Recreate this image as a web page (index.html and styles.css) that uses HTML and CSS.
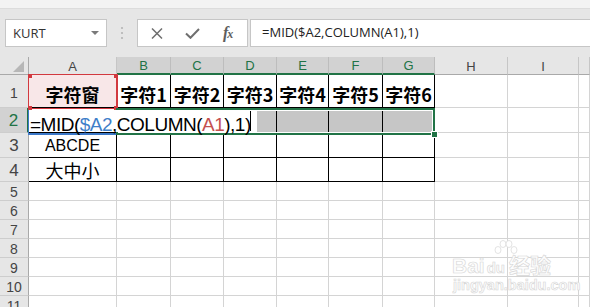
FILE: index.html
```html
<!DOCTYPE html>
<html lang="zh">
<head>
<meta charset="utf-8">
<title>Excel</title>
<link rel="stylesheet" href="styles.css">
</head>
<body>
<div class="topstrip"></div>
<div class="fbar">
  <div class="namebox"><span>KURT</span><span class="caret"></span></div>
  <div class="grip"><svg width="4" height="14" viewBox="0 0 4 14"><circle cx="2" cy="2" r="1.1" fill="#b5b5b5"/><circle cx="2" cy="7" r="1.1" fill="#b5b5b5"/><circle cx="2" cy="12" r="1.1" fill="#b5b5b5"/></svg></div>
  <div class="btns">
    <svg class="ic-x" width="12" height="11" viewBox="0 0 12 11"><path d="M1 0.5 L11 10.5 M11 0.5 L1 10.5" stroke="#6f6f6f" stroke-width="1.5" fill="none"/></svg>
    <svg class="ic-ok" width="15" height="11" viewBox="0 0 15 11"><path d="M1 5.5 L5.5 9.8 L14 1" stroke="#6f6f6f" stroke-width="2" fill="none"/></svg>
    <span class="fx">f<span class="fxx">x</span></span>
  </div>
  <div class="finput">=MID($A2,COLUMN(A1),1)</div>
</div>

<div class="sheet">
  <div class="corner"><span class="tri"></span></div>
  <div class="ch">A</div>
  <div class="ch sel">B</div>
  <div class="ch sel">C</div>
  <div class="ch sel">D</div>
  <div class="ch sel">E</div>
  <div class="ch sel">F</div>
  <div class="ch sel">G</div>
  <div class="ch">H</div>
  <div class="ch">I</div>
  <div class="ch"></div>

  <div class="rh r1">1</div>
  <div class="t h1 pink">字符窗</div>
  <div class="t h1">字符1</div>
  <div class="t h1">字符2</div>
  <div class="t h1">字符3</div>
  <div class="t h1">字符4</div>
  <div class="t h1">字符5</div>
  <div class="t h1">字符6</div>
  <div class="c"></div><div class="c"></div><div class="c"></div>

  <div class="rh big sel">2</div>
  <div class="t"></div>
  <div class="t gray"></div>
  <div class="t gray"></div>
  <div class="t gray"></div>
  <div class="t gray"></div>
  <div class="t gray"></div>
  <div class="t gray"></div>
  <div class="c"></div><div class="c"></div><div class="c"></div>

  <div class="rh big">3</div>
  <div class="t lat">ABCDE</div>
  <div class="t"></div><div class="t"></div><div class="t"></div><div class="t"></div><div class="t"></div><div class="t"></div>
  <div class="c"></div><div class="c"></div><div class="c"></div>

  <div class="rh big">4</div>
  <div class="t cjk">大中小</div>
  <div class="t"></div><div class="t"></div><div class="t"></div><div class="t"></div><div class="t"></div><div class="t"></div>
  <div class="c"></div><div class="c"></div><div class="c"></div>

  <div class="rh">5</div>
  <div class="c"></div><div class="c"></div><div class="c"></div><div class="c"></div><div class="c"></div><div class="c"></div><div class="c"></div><div class="c"></div><div class="c"></div><div class="c"></div>
  <div class="rh">6</div>
  <div class="c"></div><div class="c"></div><div class="c"></div><div class="c"></div><div class="c"></div><div class="c"></div><div class="c"></div><div class="c"></div><div class="c"></div><div class="c"></div>
  <div class="rh">7</div>
  <div class="c"></div><div class="c"></div><div class="c"></div><div class="c"></div><div class="c"></div><div class="c"></div><div class="c"></div><div class="c"></div><div class="c"></div><div class="c"></div>
  <div class="rh">8</div>
  <div class="c"></div><div class="c"></div><div class="c"></div><div class="c"></div><div class="c"></div><div class="c"></div><div class="c"></div><div class="c"></div><div class="c"></div><div class="c"></div>
  <div class="rh">9</div>
  <div class="c"></div><div class="c"></div><div class="c"></div><div class="c"></div><div class="c"></div><div class="c"></div><div class="c"></div><div class="c"></div><div class="c"></div><div class="c"></div>
  <div class="rh">10</div>
  <div class="c"></div><div class="c"></div><div class="c"></div><div class="c"></div><div class="c"></div><div class="c"></div><div class="c"></div><div class="c"></div><div class="c"></div><div class="c"></div>
  <div class="rh">11</div>
  <div class="c"></div><div class="c"></div><div class="c"></div><div class="c"></div><div class="c"></div><div class="c"></div><div class="c"></div><div class="c"></div><div class="c"></div><div class="c"></div>

  <div class="ref-a2"></div>
  <div class="ref-a1"><i class="sq tl"></i><i class="sq tr"></i><i class="sq bl"></i><i class="sq br"></i></div>
  <div class="selbox"><i class="handle"></i></div>
  <div class="editbox"><span>=MID(</span><span class="blue">$A2</span><span>,COLUMN(</span><span class="red">A1</span><span>),1)</span><i class="caretline"></i></div>

  <div class="watermark">
    <svg class="paw" width="30" height="22" viewBox="0 0 30 22"><g fill="#fff" stroke="#dcdcdc" stroke-width="0.8"><ellipse cx="8" cy="10" rx="3" ry="3.5"/><ellipse cx="13" cy="4" rx="3" ry="3.5"/><ellipse cx="19" cy="4" rx="3" ry="3.5"/><ellipse cx="24" cy="10" rx="3" ry="3.5"/></g></svg>
    <div class="wm1">Bai<span class="du">du</span>经验</div>
    <div class="wm2">jingyan.baidu.com</div>
  </div>
</div>
</body>
</html>
```
FILE: styles.css
```css
html, body {
  margin: 0;
  padding: 0;
  background: #fff;
  width: 590px;
  height: 307px;
  overflow: hidden;
  font-family: "Open Sans", "Liberation Sans", sans-serif;
}

.topstrip {
  height: 8px;
  background: #f3f3f3;
  border-bottom: 1px solid #dcdcdc;
}

.fbar {
  height: 48px;
  box-sizing: border-box;
  padding-top: 10px;
  background: #e6e6e6;
  display: flex;
  align-items: flex-start;
}

.namebox {
  margin-left: 5px;
  width: 102px;
  height: 28px;
  box-sizing: border-box;
  background: #fff;
  border: 1px solid #c6c6c6;
  display: flex;
  align-items: center;
  padding-left: 7px;
  font-size: 13px;
  color: #333;
}

.caret {
  margin-left: auto;
  margin-right: 7px;
  width: 0;
  height: 0;
  border-left: 4px solid transparent;
  border-right: 4px solid transparent;
  border-top: 4px solid #7a7a7a;
}

.grip {
  width: 30px;
  height: 28px;
  display: flex;
  align-items: center;
  justify-content: center;
}

.btns {
  width: 111px;
  height: 28px;
  box-sizing: border-box;
  background: #fff;
  border: 1px solid #c6c6c6;
  display: flex;
  align-items: center;
}

.ic-x { margin-left: 13px; }
.ic-ok { margin-left: 22px; }

.fx {
  margin-left: 23px;
  font-family: "Liberation Serif", serif;
  font-style: italic;
  font-weight: 700;
  font-size: 16px;
  color: #5e5e5e;
  letter-spacing: -1px;
  line-height: 1;
}
.fxx { font-size: 12px; }

.finput {
  margin-left: 2px;
  flex: 1;
  height: 28px;
  box-sizing: border-box;
  background: #fff;
  border: 1px solid #c6c6c6;
  border-right: none;
  padding-left: 11px;
  font-size: 13px;
  line-height: 25px;
  color: #222;
}

.sheet {
  position: relative;
  display: grid;
  grid-template-columns: 29px 88px 54px 53px 53px 52px 54px 52px 73px 71px 1fr;
  grid-template-rows: 18px 33px 25px 25px 24px repeat(7, 19px);
}

.sheet > div {
  box-sizing: border-box;
}

.corner {
  background: #e6e6e6;
  border-right: 1px solid #a9a9a9;
  border-bottom: 1px solid #a9a9a9;
  display: flex;
  justify-content: flex-end;
  align-items: flex-end;
  padding: 0 4px 2px 0;
}

.tri {
  width: 0;
  height: 0;
  border-left: 11px solid transparent;
  border-bottom: 11px solid #b7b7b7;
}

.ch {
  background: #e6e6e6;
  border-right: 1px solid #c6c6c6;
  border-bottom: 1px solid #a9a9a9;
  color: #444;
  font-family: "Liberation Sans", sans-serif;
  font-size: 13px;
  display: flex;
  align-items: center;
  justify-content: center;
  padding-top: 1px;
}

.ch.sel {
  background: #d2d2d2;
  color: #217346;
  border-bottom: 2px solid #217346;
  border-right-color: #bdbdbd;
}

.rh {
  background: #e6e6e6;
  border-right: 1px solid #a9a9a9;
  border-bottom: 1px solid #cdcdcd;
  color: #444;
  font-family: "Liberation Sans", sans-serif;
  font-size: 14px;
  display: flex;
  justify-content: center;
  align-items: center;
  padding-top: 1px;
}

.rh.r1 { padding-top: 4px; }

.rh.big { font-size: 17px; padding-top: 2px; }

.rh.sel {
  background: #d2d2d2;
  color: #217346;
  border-right: 2px solid #217346;
}

.c {
  border-right: 1px solid #d4d4d4;
  border-bottom: 1px solid #d4d4d4;
}

.t {
  border-right: 1px solid #000;
  border-bottom: 1px solid #000;
  display: flex;
  justify-content: center;
  align-items: flex-end;
  color: #000;
  line-height: 1;
  white-space: nowrap;
}

.h1 {
  font-family: "Noto Sans CJK SC", sans-serif;
  font-weight: 700;
  font-size: 18px;
  padding-bottom: 4px;
}

.pink { background: #f8e7e8; }
.gray { background: #c6c6c6; }

.lat {
  font-family: "Liberation Sans", sans-serif;
  font-size: 16px;
  padding-bottom: 3px;
}

.cjk {
  font-family: "Noto Sans CJK SC", sans-serif;
  font-size: 18px;
  padding-bottom: 2px;
}

.ref-a1 {
  position: absolute;
  left: 28px;
  top: 17px;
  width: 90px;
  height: 35px;
  box-sizing: border-box;
  border: 1px solid #d2393f;
  border-right-width: 2px;
}

.sq {
  position: absolute;
  width: 4px;
  height: 4px;
  background: #d2393f;
}
.sq.tl { left: -1px; top: -1px; }
.sq.tr { right: -2px; top: -1px; }
.sq.bl { left: -1px; bottom: -2px; }
.sq.br { right: -2px; bottom: -2px; }

.ref-a2 {
  position: absolute;
  left: 28px;
  top: 51px;
  width: 90px;
  height: 27px;
  box-sizing: border-box;
  border: 1px solid #3b78c8;
  border-bottom-width: 2px;
}

.selbox {
  position: absolute;
  left: 116px;
  top: 51px;
  width: 319px;
  height: 27px;
  box-sizing: border-box;
  border: 2px solid #217346;
  box-shadow: inset 0 0 0 1px #fff;
}

.handle {
  position: absolute;
  right: -4px;
  bottom: -4px;
  width: 5px;
  height: 5px;
  background: #217346;
  box-shadow: 0 0 0 1px #fff;
}

.editbox {
  position: absolute;
  left: 29px;
  top: 53px;
  width: 228px;
  height: 22px;
  background: #fff;
  padding-left: 1px;
  box-sizing: border-box;
  font-family: "Liberation Sans", sans-serif;
  font-size: 19px;
  letter-spacing: -0.5px;
  line-height: 29px;
  color: #000;
  white-space: nowrap;
}

.blue { color: #3f7fc9; }
.red { color: #c5504f; }

.caretline {
  position: absolute;
  left: 221px;
  top: 1px;
  width: 1px;
  height: 20px;
  background: #000;
}

.watermark {
  position: absolute;
  left: 452px;
  top: 183px;
  width: 110px;
  height: 50px;
  font-family: "Liberation Sans", sans-serif;
  color: #fdfdfd;
  -webkit-text-stroke: 0.6px #d6d6d6;
}

.paw {
  position: absolute;
  left: 38px;
  top: 0;
}

.wm1 {
  position: absolute;
  left: 0;
  top: 17px;
  font-size: 21px;
  line-height: 18px;
  font-weight: 700;
  white-space: nowrap;
  font-family: "Liberation Sans", "Noto Sans CJK SC", sans-serif;
}

.du { font-size: 15px; margin: 0 4px 0 2px; }

.wm2 {
  position: absolute;
  left: 1px;
  top: 39px;
  font-size: 14.5px;
  line-height: 13px;
  font-weight: 700;
  white-space: nowrap;
}
```
